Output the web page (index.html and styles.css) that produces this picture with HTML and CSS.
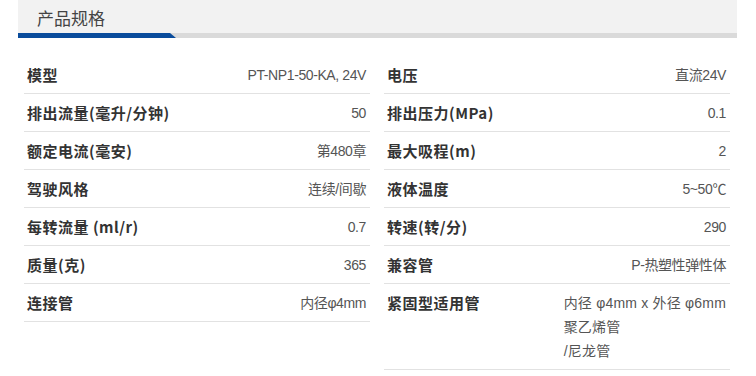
FILE: index.html
```html
<!DOCTYPE html>
<html lang="zh-CN">
<head>
<meta charset="utf-8">
<title>产品规格</title>
<link rel="stylesheet" href="styles.css">
</head>
<body>
<div class="page">
  <div class="head">
    <h2 class="head-title">产品规格</h2>
    <div class="head-bar"><span class="head-accent"></span></div>
  </div>
  <div class="specs">
    <ul class="spec-list">
      <li class="row"><span class="label">模型</span><span class="value">PT-NP1-50-KA, 24V</span></li>
      <li class="row"><span class="label">排出流量(毫升/分钟)</span><span class="value">50</span></li>
      <li class="row"><span class="label">额定电流(毫安)</span><span class="value">第480章</span></li>
      <li class="row"><span class="label">驾驶风格</span><span class="value">连续/间歇</span></li>
      <li class="row"><span class="label">每转流量 (ml/r)</span><span class="value">0.7</span></li>
      <li class="row"><span class="label">质量(克)</span><span class="value">365</span></li>
      <li class="row"><span class="label">连接管</span><span class="value">内径φ4mm</span></li>
    </ul>
    <ul class="spec-list">
      <li class="row"><span class="label">电压</span><span class="value">直流24V</span></li>
      <li class="row"><span class="label">排出压力(MPa)</span><span class="value">0.1</span></li>
      <li class="row"><span class="label">最大吸程(m)</span><span class="value">2</span></li>
      <li class="row"><span class="label">液体温度</span><span class="value">5~50℃</span></li>
      <li class="row"><span class="label">转速(转/分)</span><span class="value">290</span></li>
      <li class="row"><span class="label">兼容管</span><span class="value">P-热塑性弹性体</span></li>
      <li class="row"><span class="label">紧固型适用管</span><span class="value value-multi">内径 φ4mm x 外径 φ6mm<br>聚乙烯管<br>/尼龙管</span></li>
    </ul>
  </div>
</div>
</body>
</html>
```

FILE: styles.css
```css
* { box-sizing: border-box; }

html, body {
  margin: 0;
  padding: 0;
  background: #ffffff;
}

body {
  font-family: "Liberation Sans", "Noto Sans CJK SC", sans-serif;
  color: #333333;
}

.page {
  padding: 0 19px 0 18px;
}

.head {
  background: #f2f2f2;
}

.head-title {
  margin: 0;
  padding: 0 0 0 19px;
  height: 33px;
  line-height: 35px;
  font-size: 17px;
  font-weight: normal;
  color: #444444;
  font-family: "Noto Sans CJK SC", sans-serif;
}

.head-bar {
  height: 5px;
  background: #dadada;
  display: flex;
}

.head-accent {
  width: 158px;
  height: 5px;
  background: #0a4c9c;
  clip-path: polygon(0 0, 152px 0, 158px 100%, 0 100%);
}

.specs {
  display: grid;
  grid-template-columns: 346px 346px;
  column-gap: 14px;
  align-items: start;
  padding: 0 6px;
  margin-top: 18px;
}

.spec-list {
  list-style: none;
  margin: 0;
  padding: 0;
}

.row {
  display: flex;
  justify-content: space-between;
  align-items: flex-start;
  padding: 7px 4px 6px 3px;
  line-height: 24px;
  border-bottom: 1px solid #e2e2e2;
}

.label {
  font-family: "Noto Sans CJK SC", sans-serif;
  font-size: 15px;
  font-weight: bold;
  color: #333333;
  letter-spacing: 0.5px;
  white-space: nowrap;
}

.value {
  font-size: 14px;
  color: #555555;
  letter-spacing: -0.4px;
  text-align: right;
  white-space: nowrap;
}

.value-multi {
  text-align: left;
  letter-spacing: 0.2px;
}
```
